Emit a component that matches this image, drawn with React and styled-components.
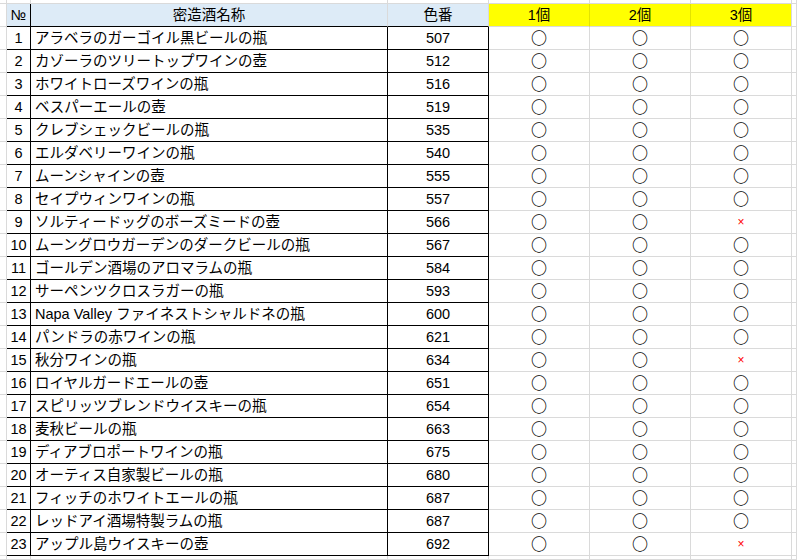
import styled, { createGlobalStyle } from 'styled-components';

const GlobalStyle = createGlobalStyle`
  html, body {
    margin: 0;
    padding: 0;
    background: #ffffff;
    overflow: hidden;
  }
  body {
    font-family: "Liberation Sans", "Noto Sans CJK JP", sans-serif;
  }
`

const GRID = '#dadada';
const BLACK = '#000000';
const HEAD_BLUE = '#ddebf7';
const YELLOW = '#ffff00';
const YELLOW_LINE = '#e3e300';

const Sheet = styled.div`
  display: grid;
  grid-template-columns: 7px 24px 357px 101px 101px 101px 101px 1fr;
  grid-template-rows: 4px repeat(24, 23px) 1fr;
  width: 797px;
  height: 560px;
  overflow: hidden;
  font-size: 14.5px;
  color: #000;
`

const Cell = styled.div`
  box-sizing: border-box;
  display: flex;
  align-items: center;
  justify-content: ${props => props.$align || 'center'};
  padding: ${props => props.$align === 'flex-start' ? '0 0 0 4px' : '0'};
  border-right: 1px solid ${props => props.$right || GRID};
  border-bottom: 1px solid ${props => props.$bottom || GRID};
  background: ${props => props.$bg || 'transparent'};
  white-space: nowrap;
  line-height: 18px;
`

const Circle = styled.span`
  font-family: "Noto Sans CJK JP", sans-serif;
  font-size: 16px;
  font-weight: 700;
  color: #000;
  line-height: 18px;
  padding-bottom: 2px;
`

const Cross = styled.span`
  font-family: "Liberation Sans", sans-serif;
  font-size: 12px;
  color: #ff0000;
  line-height: 16px;
`

const rows = [
  [1, 'アラベラのガーゴイル黒ビールの瓶', 507],
  [2, 'カゾーラのツリートップワインの壺', 512],
  [3, 'ホワイトローズワインの瓶', 516],
  [4, 'ベスパーエールの壺', 519],
  [5, 'クレブシェックビールの瓶', 535],
  [6, 'エルダベリーワインの瓶', 540],
  [7, 'ムーンシャインの壺', 555],
  [8, 'セイプウィンワインの瓶', 557],
  [9, 'ソルティードッグのボーズミードの壺', 566, true],
  [10, 'ムーングロウガーデンのダークビールの瓶', 567],
  [11, 'ゴールデン酒場のアロマラムの瓶', 584],
  [12, 'サーペンツクロスラガーの瓶', 593],
  [13, 'Napa Valley ファイネストシャルドネの瓶', 600],
  [14, 'パンドラの赤ワインの瓶', 621],
  [15, '秋分ワインの瓶', 634, true],
  [16, 'ロイヤルガードエールの壺', 651],
  [17, 'スピリッツブレンドウイスキーの瓶', 654],
  [18, '麦秋ビールの瓶', 663],
  [19, 'ディアブロポートワインの瓶', 675],
  [20, 'オーティス自家製ビールの瓶', 680],
  [21, 'フィッチのホワイトエールの瓶', 687],
  [22, 'レッドアイ酒場特製ラムの瓶', 687],
  [23, 'アップル島ウイスキーの壺', 692, true],
];

function Mark({ ok }) {
  return ok ? <Circle>○</Circle> : <Cross>×</Cross>;
}

function Row({ no, name, code, bad }) {
  return (
    <>
      <Cell />
      <Cell $right={BLACK} $bottom={BLACK}>{no}</Cell>
      <Cell $right={BLACK} $bottom={BLACK} $align="flex-start">{name}</Cell>
      <Cell $right={BLACK} $bottom={BLACK}>{code}</Cell>
      <Cell><Mark ok /></Cell>
      <Cell><Mark ok /></Cell>
      <Cell><Mark ok={!bad} /></Cell>
      <Cell />
    </>
  );
}

function App() {
  return (
    <>
      <GlobalStyle />
      <Sheet>
        {/* top stub row */}
        {Array.from({ length: 8 }).map((_, i) => <Cell key={'t' + i} />)}

        {/* header */}
        <Cell />
        <Cell $bg={HEAD_BLUE} $right={BLACK} $bottom={BLACK}>№</Cell>
        <Cell $bg={HEAD_BLUE} $bottom={BLACK}>密造酒名称</Cell>
        <Cell $bg={HEAD_BLUE} $bottom={BLACK}>色番</Cell>
        <Cell $bg={YELLOW} $right={YELLOW_LINE}>1個</Cell>
        <Cell $bg={YELLOW} $right={YELLOW_LINE}>2個</Cell>
        <Cell $bg={YELLOW}>3個</Cell>
        <Cell />

        {rows.map(([no, name, code, third]) => (
          <Row key={no} no={no} name={name} code={code} bad={third} />
        ))}

        {/* filler row */}
        {Array.from({ length: 8 }).map((_, i) => <Cell key={'f' + i} />)}
      </Sheet>
    </>
  );
}

export default App;
